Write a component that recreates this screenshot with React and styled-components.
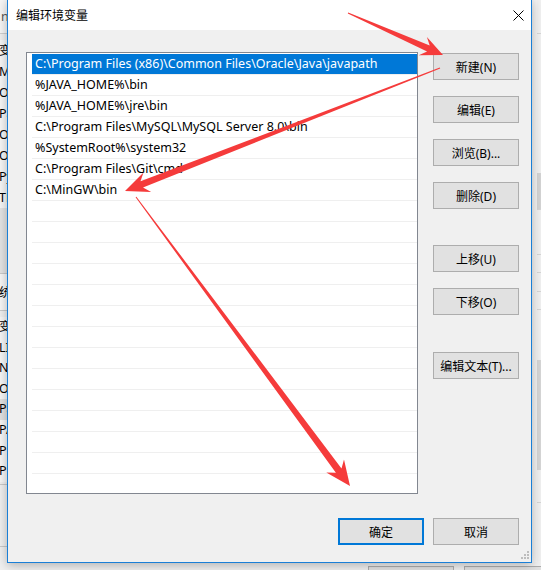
import React from 'react';
import styled, { createGlobalStyle } from 'styled-components';

const FONT = '"Noto Sans", "Noto Sans CJK SC", sans-serif';

const Global = createGlobalStyle`
  html, body { margin: 0; padding: 0; background: #f0f0f0; }
  body { width: 541px; height: 570px; overflow: hidden; font-family: ${FONT}; }
  * { box-sizing: border-box; }
`;

const Desktop = styled.div`
  position: relative;
  width: 541px;
  height: 570px;
  overflow: hidden;
  background: #f0f0f0;
  font-family: ${FONT};
  font-size: 12px;
  color: #000;
`;

/* ---------- window behind the dialog ---------- */
const BackLeft = styled.div`
  position: absolute;
  left: 0;
  top: 0;
  width: 8px;
  height: 570px;
  overflow: hidden;
  display: flex;
  flex-direction: column;
  background: #f0f0f0;
  font-size: 12.5px;
`;
const BackTop = styled.div`
  height: 34px;
  flex: none;
  border-bottom: 1px solid #cfcfcf;
  background: #f6f6f6;
  color: #555;
  line-height: 33px;
  padding-left: 1px;
  white-space: nowrap;
`;
const BackGap = styled.div`
  height: ${p => p.$h}px;
  flex: none;
  background: ${p => p.$bg || 'transparent'};
  border-bottom: ${p => (p.$line ? '1px solid #c9c9c9' : 'none')};
`;
const BackRow = styled.div`
  height: ${p => p.$h || 21}px;
  flex: none;
  line-height: ${p => p.$h || 21}px;
  white-space: nowrap;
  margin-left: -1px;
  background: ${p => (p.$hl ? '#e2e2e2' : '#f7f7f7')};
  border-bottom: ${p => (p.$line ? '1px solid #c9c9c9' : 'none')};
`;
const BackRight = styled.div`
  position: absolute;
  left: 532px;
  top: 0;
  width: 9px;
  height: 570px;
  display: flex;
  flex-direction: column;
  background: #f0f0f0;
  border-left: 5px solid #f3f3f3;
`;
const RightBand = styled.div`
  height: ${p => p.$h}px;
  flex: none;
  background: ${p => p.$bg || 'transparent'};
  border-bottom: ${p => (p.$line ? '1px solid #d6d6d6' : 'none')};
`;
const BackBottom = styled.div`
  position: absolute;
  left: 0;
  top: 562px;
  width: 541px;
  height: 8px;
  display: flex;
  gap: 10px;
  padding: 4px 0 0 368px;
  background: #f0f0f0;
`;
const BackButton = styled.div`
  width: 86px;
  height: 27px;
  flex: none;
  background: #e1e1e1;
  border: 1px solid #adadad;
`;

/* ---------- dialog ---------- */
const Dialog = styled.div`
  position: absolute;
  left: 7px;
  top: -1px;
  width: 525px;
  height: 564px;
  display: flex;
  flex-direction: column;
  background: #f0f0f0;
  border: 1px solid #1a7fd6;
  box-shadow: 0 2px 10px rgba(0, 0, 0, 0.28);
`;
const TitleBar = styled.div`
  height: 30px;
  flex: none;
  display: flex;
  align-items: center;
  justify-content: space-between;
  background: #fff;
  padding-left: 8px;
`;
const Title = styled.span`
  font-size: 12px;
  color: #000;
`;
const CloseBox = styled.div`
  width: 26px;
  height: 30px;
  display: flex;
  align-items: center;
  justify-content: center;
`;
const Body = styled.div`
  flex: 1;
  display: flex;
  flex-direction: column;
  padding: 22px 12px 0 18px;
`;
const MainRow = styled.div`
  display: flex;
  gap: 15px;
`;
const ListBox = styled.div`
  width: 392px;
  height: 442px;
  flex: none;
  background: #fff;
  border: 1px solid #828790;
  overflow: hidden;
  padding: 1px 0 0 5px;
`;
const Row = styled.div`
  height: 21px;
  padding-left: 3px;
  line-height: 20px;
  font-size: 12.5px;
  white-space: nowrap;
  overflow: hidden;
  border-bottom: 1px solid #efefef;
  background: ${p => (p.$selected ? '#0078d7' : '#fff')};
  background-clip: padding-box;
  color: ${p => (p.$selected ? '#fff' : '#000')};
`;
const ButtonColumn = styled.div`
  width: 86px;
  flex: none;
  display: flex;
  flex-direction: column;
  gap: 16px;
  padding-top: 1px;
`;
const Button = styled.div`
  width: 86px;
  height: 27px;
  flex: none;
  display: flex;
  align-items: center;
  justify-content: center;
  margin-top: ${p => p.$space || 0}px;
  background: #e1e1e1;
  border: ${p => (p.$default ? '2px solid #0078d7' : '1px solid #adadad')};
  font-size: 12px;
  color: #000;
  white-space: nowrap;
`;
const Footer = styled.div`
  display: flex;
  justify-content: flex-end;
  gap: 9px;
  margin-top: 24px;
`;
const Grip = styled.svg`
  position: absolute;
  right: 0;
  bottom: 0;
`;
const Overlay = styled.svg`
  position: absolute;
  left: 0;
  top: 0;
  pointer-events: none;
`;

function arrowPoints(x1, y1, x2, y2, head, wing, shaft) {
  const dx = x2 - x1;
  const dy = y2 - y1;
  const L = Math.hypot(dx, dy);
  const ux = dx / L;
  const uy = dy / L;
  const nx = -uy;
  const ny = ux;
  const bx = x2 - ux * head;
  const by = y2 - uy * head;
  const t = 0.5;
  const p = (x, y) => `${x.toFixed(1)},${y.toFixed(1)}`;
  return [
    p(x1 + nx * t, y1 + ny * t),
    p(bx + ux * 3 + nx * shaft, by + uy * 3 + ny * shaft),
    p(bx - ux * 3 + nx * wing, by - uy * 3 + ny * wing),
    p(x2, y2),
    p(bx - ux * 3 - nx * wing, by - uy * 3 - ny * wing),
    p(bx + ux * 3 - nx * shaft, by + uy * 3 - ny * shaft),
    p(x1 - nx * t, y1 - ny * t),
  ].join(' ');
}

const paths = [
  'C:\\Program Files (x86)\\Common Files\\Oracle\\Java\\javapath',
  '%JAVA_HOME%\\bin',
  '%JAVA_HOME%\\jre\\bin',
  'C:\\Program Files\\MySQL\\MySQL Server 8.0\\bin',
  '%SystemRoot%\\system32',
  'C:\\Program Files\\Git\\cmd',
  'C:\\MinGW\\bin',
];
const rows = [...paths, ...Array(15).fill('')];

const backRowsA = ['变', 'M', 'O', 'Pa', 'OT', 'OT', 'Py', 'TE'];
const backRowsB = ['变', 'LI', 'N', 'O', 'Pa', 'PA', 'PE', 'PR'];

export default function App() {
  return (
    <Desktop>
      <Global />
      <BackLeft>
        <BackTop>n</BackTop>
        <BackGap $h={6} />
        {backRowsA.map((t, i) => (
          <BackRow key={'a' + i}>{t}</BackRow>
        ))}
        <BackGap $h={66} $bg="#e4e4e4" $line />
        <BackRow $h={37} $line>统</BackRow>
        <BackGap $h={6} />
        {backRowsB.map((t, i) => (
          <BackRow key={'b' + i} $h={20.6} $hl={t === 'Pa'}>{t}</BackRow>
        ))}
        <BackGap $h={3} $line />
        <BackGap $h={62} $line />
      </BackLeft>
      <BackRight>
        <RightBand $h={34} $line />
        <RightBand $h={139} />
        <RightBand $h={37} $bg="#d4d4d4" $line />
        <RightBand $h={45} $line />
        <RightBand $h={18} $line />
        <RightBand $h={19} $line />
        <RightBand $h={18} $line />
        <RightBand $h={50} />
        <RightBand $h={110} $bg="#d6d6d6" />
        <RightBand $h={33} $line />
      </BackRight>
      <BackBottom>
        <BackButton />
        <BackButton />
      </BackBottom>

      <Dialog>
        <TitleBar>
          <Title>编辑环境变量</Title>
          <CloseBox>
            <svg width="11" height="11" viewBox="0 0 11 11">
              <path d="M0.5 0.5 L10.5 10.5 M10.5 0.5 L0.5 10.5" stroke="#000" strokeWidth="1" fill="none" />
            </svg>
          </CloseBox>
        </TitleBar>
        <Body>
          <MainRow>
            <ListBox>
              {rows.map((t, i) => (
                <Row key={i} $selected={i === 0}>{t}</Row>
              ))}
            </ListBox>
            <ButtonColumn>
              <Button>新建(N)</Button>
              <Button>编辑(E)</Button>
              <Button>浏览(B)...</Button>
              <Button>删除(D)</Button>
              <Button $space={20}>上移(U)</Button>
              <Button>下移(O)</Button>
              <Button $space={21}>编辑文本(T)...</Button>
            </ButtonColumn>
          </MainRow>
          <Footer>
            <Button $default>确定</Button>
            <Button>取消</Button>
          </Footer>
        </Body>
        <Grip width="12" height="12" viewBox="0 0 12 12">
          {[[7, 1], [4, 4], [7, 4], [1, 7], [4, 7], [7, 7]].map(([x, y], i) => (
            <rect key={i} x={x + 1} y={y} width="2" height="2" fill="#bdbdbd" />
          ))}
        </Grip>
      </Dialog>

      <Overlay width="541" height="570" viewBox="0 0 541 570">
        <polygon points={arrowPoints(348, 13, 443, 55, 19, 10, 3.2)} fill="#f53b3b" />
        <polygon points={arrowPoints(440, 68, 125, 191, 21, 10.5, 3.4)} fill="#f53b3b" />
        <polygon points={arrowPoints(136, 197, 350, 486, 22, 11, 3.5)} fill="#f53b3b" />
      </Overlay>
    </Desktop>
  );
}
